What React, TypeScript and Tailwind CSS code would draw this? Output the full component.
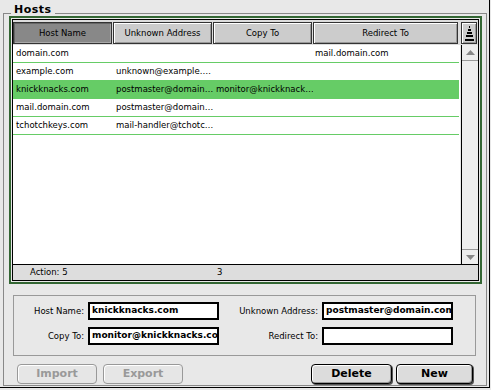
import React from 'react';

type Host = { name: string; unknown: string; copyTo: string; redirect: string };

const hosts: Host[] = [
  { name: 'domain.com', unknown: '', copyTo: '', redirect: 'mail.domain.com' },
  { name: 'example.com', unknown: 'unknown@example.…', copyTo: '', redirect: '' },
  { name: 'knickknacks.com', unknown: 'postmaster@domain…', copyTo: 'monitor@knickknack…', redirect: '' },
  { name: 'mail.domain.com', unknown: 'postmaster@domain…', copyTo: '', redirect: '' },
  { name: 'tchotchkeys.com', unknown: 'mail-handler@tchotc…', copyTo: '', redirect: '' },
];

const selectedHost = 'knickknacks.com';

const HeaderCell = ({ label, className, active = false }: { label: string; className: string; active?: boolean }) => (
  <div
    className={`${className} h-[22px] flex items-center justify-center border border-[#333] text-[8.5px] text-black ${
      active
        ? 'bg-[#888] shadow-[inset_1px_1px_0_#666,inset_-1px_-1px_0_#a8a8a8]'
        : 'bg-[#ccc] shadow-[inset_1px_1px_0_#fff,inset_-1px_-1px_0_#999]'
    }`}
  >
    {label}
  </div>
);

const SortIcon = () => (
  <svg width="9" height="15" viewBox="0 0 9 15" aria-hidden="true">
    <rect x="4" y="0" width="1" height="2" fill="#000" />
    <rect x="3" y="3" width="3" height="2" fill="#000" />
    <rect x="2" y="6" width="5" height="2" fill="#000" />
    <rect x="1" y="9" width="7" height="2" fill="#000" />
    <rect x="0" y="13" width="9" height="2" fill="#000" />
  </svg>
);

const Arrow = ({ up }: { up: boolean }) => (
  <svg width="9" height="5" viewBox="0 0 9 5" aria-hidden="true">
    <path d={up ? 'M0 5 L4.5 0 L9 5 Z' : 'M0 0 L9 0 L4.5 5 Z'} fill="#888" />
  </svg>
);

const HostRow = ({ host }: { host: Host }) => {
  const active = host.name === selectedHost;
  return (
    <div
      className={`h-[18px] w-[446px] flex items-center border-b border-[#66cc66] text-[8.5px] text-black whitespace-nowrap ${
        active ? 'bg-[#66cc66]' : 'bg-white'
      }`}
    >
      <div className="w-[100px] pl-[3px] overflow-hidden">{host.name}</div>
      <div className="w-[100px] pl-[3px] overflow-hidden">{host.unknown}</div>
      <div className="w-[100px] pl-[3px] overflow-hidden">{host.copyTo}</div>
      <div className="w-[146px] pl-[2px] overflow-hidden">{host.redirect}</div>
    </div>
  );
};

const Field = ({ label, value, labelWidth }: { label: string; value: string; labelWidth: string }) => (
  <div className="flex items-center">
    <div className={`${labelWidth} text-right text-[8.5px] text-black pr-[4px] whitespace-nowrap`}>{label}</div>
    <div className="w-[131px] h-[18px] border-2 border-black bg-white pl-[2px] flex items-center overflow-hidden whitespace-nowrap text-[9px] font-bold text-black">
      {value}
    </div>
  </div>
);

const MacButton = ({ label, width, disabled = false }: { label: string; width: string; disabled?: boolean }) => (
  <button
    type="button"
    className={`${width} h-[20px] rounded-[4px] border flex items-center justify-center text-[11px] font-bold ${
      disabled
        ? 'border-[#999] text-[#999] bg-[#e6e6e6] shadow-[inset_1px_1px_0_#fff]'
        : 'border-black text-black bg-[#dcdcdc] shadow-[inset_1px_1px_0_#fff,inset_-1px_-1px_0_#999,1px_1px_0_#555]'
    }`}
  >
    {label}
  </button>
);

export default function App() {
  return (
    <div className="relative w-[491px] h-[390px] bg-[#e8e8e8] font-['DejaVu_Sans',sans-serif] overflow-hidden">
      <div className="w-[490px] h-[388px] border-r border-b border-black pl-[3px] pt-[13px]">
        <div className="w-[484px] h-[373px] border border-[#888] flex flex-col">
          {/* hosts list */}
          <div className="mt-[2px] ml-[5px] w-[473px] h-[268px] border-2 border-[#336633] p-[1px]">
            <div className="w-full h-full border border-black flex flex-col">
              <div className="flex flex-1 min-h-0">
                <div className="w-[447px] flex flex-col bg-white">
                  <div className="h-[25px] pt-[2px] flex gap-[1px] bg-[#ddd]">
                    <HeaderCell label="Host Name" className="w-[99px]" active />
                    <HeaderCell label="Unknown Address" className="w-[99px]" />
                    <HeaderCell label="Copy To" className="w-[99px]" />
                    <HeaderCell label="Redirect To" className="w-[145px]" />
                  </div>
                  <div className="flex-1">
                    {hosts.map(host => (
                      <HostRow key={host.name} host={host} />
                    ))}
                  </div>
                </div>
                <div className="w-[18px] flex flex-col">
                  <div className="h-[25px] pt-[2px] pl-[1px] bg-[#ddd]">
                    <div className="w-[16px] h-[22px] border border-[#333] bg-[#ccc] shadow-[inset_1px_1px_0_#fff,inset_-1px_-1px_0_#999] flex items-center justify-center">
                      <SortIcon />
                    </div>
                  </div>
                  <div className="flex-1 ml-[1px] border-l border-black bg-[#eee] flex flex-col justify-between">
                    <div className="h-[16px] border-b border-[#999] flex items-center justify-center">
                      <Arrow up />
                    </div>
                    <div className="h-[15px] border-t border-[#999] flex items-center justify-center">
                      <Arrow up={false} />
                    </div>
                  </div>
                </div>
              </div>
              <div className="h-[16px] border-t border-black bg-[#ddd] flex items-center text-[8.5px] text-black">
                <span className="ml-[17px] w-[187px]">Action: 5</span>
                <span>3</span>
              </div>
            </div>
          </div>

          {/* edit form */}
          <div className="mt-[11px] ml-[9px] w-[463px] h-[61px] border border-[#999] pt-[6px] flex flex-col gap-[7px]">
            <div className="flex">
              <Field label="Host Name:" value="knickknacks.com" labelWidth="w-[74px]" />
              <Field label="Unknown Address:" value="postmaster@domain.com" labelWidth="w-[103px]" />
            </div>
            <div className="flex">
              <Field label="Copy To:" value="monitor@knickknacks.com" labelWidth="w-[74px]" />
              <Field label="Redirect To:" value="" labelWidth="w-[103px]" />
            </div>
          </div>

          {/* buttons */}
          <div className="mt-[8px] px-[13px] flex justify-between">
            <div className="flex gap-[6px]">
              <MacButton label="Import" width="w-[80px]" disabled />
              <MacButton label="Export" width="w-[80px]" disabled />
            </div>
            <div className="flex gap-[4px]">
              <MacButton label="Delete" width="w-[81px]" />
              <MacButton label="New" width="w-[77px]" />
            </div>
          </div>
        </div>
      </div>
      <span className="absolute left-[11px] top-[3px] px-[3px] bg-[#e8e8e8] text-[11px] leading-[13px] font-bold text-black tracking-[0.5px]">
        Hosts
      </span>
    </div>
  );
}
